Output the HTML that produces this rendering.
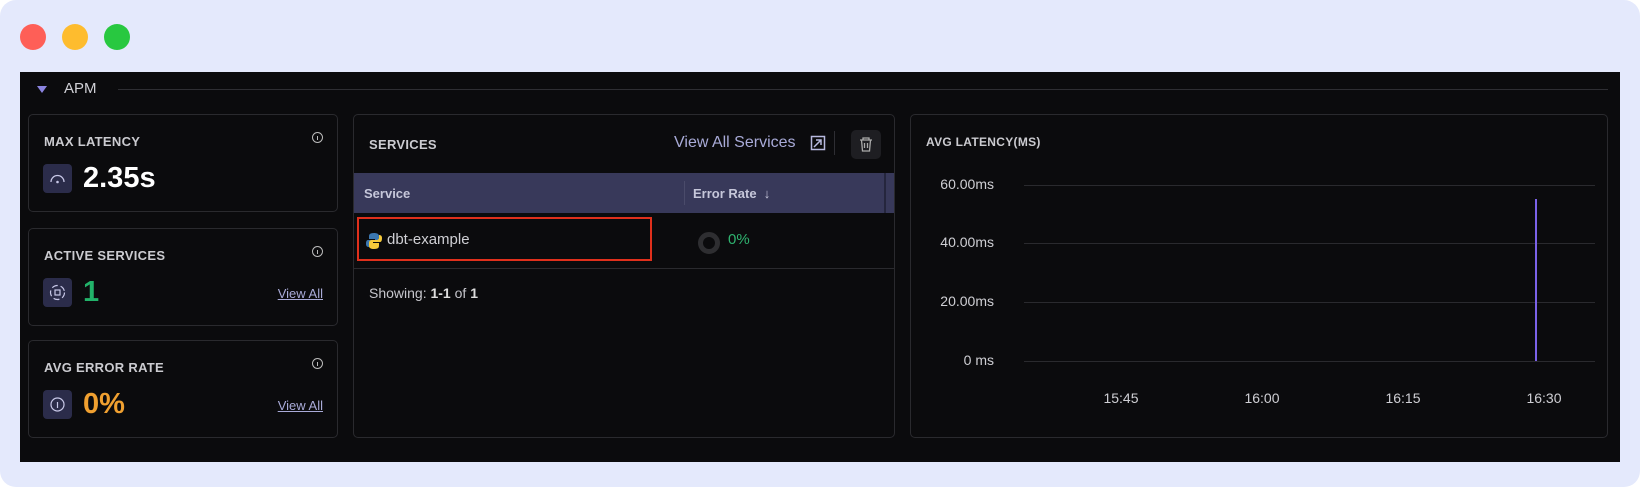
<!DOCTYPE html>
<html><head><style>
*{margin:0;padding:0;box-sizing:border-box}
body{width:1640px;height:487px;background:#fff;font-family:"Liberation Sans",sans-serif;position:relative;overflow:hidden}
.outer{position:absolute;left:0;top:0;width:1640px;height:487px;background:#e4e9fc;border-radius:16px}
.dot{position:absolute;top:24px;width:26px;height:26px;border-radius:50%}
.panel{position:absolute;left:20px;top:72px;width:1600px;height:390px;background:#0b0b0d}
.card{position:absolute;border:1px solid #2a2a2e;border-radius:5px;background:#0b0b0d}
.lbl{position:absolute;color:#cbcbd0;font-weight:bold;font-size:13px;letter-spacing:.3px}
.ibox{position:absolute;left:14px;width:29px;height:29px;background:#2b2c4a;border-radius:4px}
.big{position:absolute;font-weight:bold;font-size:29px}
.va{position:absolute;right:14px;color:#a9abd8;font-size:13px;text-decoration:underline}
.info{position:absolute;right:14px;top:17px;width:11px;height:11px;border:1.3px solid #bbb;border-radius:50%}
.info:after{content:"";position:absolute;left:3.5px;top:3px;width:1.3px;height:4px;background:#bbb}
.t{position:absolute;color:#cfcfd4;font-size:14px}
</style></head><body>
<div class="outer"></div>
<div class="dot" style="left:20px;background:#fe5f57"></div>
<div class="dot" style="left:62px;background:#febc2e"></div>
<div class="dot" style="left:104px;background:#28c840"></div>
<div class="panel">
 <div style="position:absolute;left:17px;top:14px;width:0;height:0;border-left:5px solid transparent;border-right:5px solid transparent;border-top:7px solid #8b84e0"></div>
 <div style="position:absolute;left:44px;top:8px;color:#d0d0d6;font-size:15px">APM</div>
 <div style="position:absolute;left:98px;top:17px;width:1490px;height:1px;background:#2e2e33"></div>

 <div class="card" style="left:8px;top:42px;width:310px;height:98px">
  <div class="lbl" style="left:15px;top:19px">MAX LATENCY</div><div class="info"></div>
  <div class="ibox" style="top:49px"><svg width="29" height="29"><path d="M8 18 A6.5 6.5 0 0 1 21 18" fill="none" stroke="#c8c8e8" stroke-width="1.3"/><circle cx="14.5" cy="18" r="1.3" fill="#c8c8e8"/></svg></div>
  <div class="big" style="left:54px;top:47px;color:#fff">2.35s</div>
 </div>
 <div class="card" style="left:8px;top:156px;width:310px;height:98px">
  <div class="lbl" style="left:15px;top:19px">ACTIVE SERVICES</div><div class="info"></div>
  <div class="ibox" style="top:49px"><svg width="29" height="29"><circle cx="14.5" cy="14.5" r="7" fill="none" stroke="#c8c8e8" stroke-width="1.2" stroke-dasharray="6 3"/><rect x="12" y="12" width="5" height="5" fill="none" stroke="#c8c8e8" stroke-width="1.2"/></svg></div>
  <div class="big" style="left:54px;top:47px;color:#22b36a">1</div>
  <div class="va" style="top:57px">View All</div>
 </div>
 <div class="card" style="left:8px;top:268px;width:310px;height:98px">
  <div class="lbl" style="left:15px;top:19px">AVG ERROR RATE</div><div class="info"></div>
  <div class="ibox" style="top:49px"><svg width="29" height="29"><circle cx="14.5" cy="14.5" r="6.5" fill="none" stroke="#c8c8e8" stroke-width="1.2"/><line x1="14.5" y1="12" x2="14.5" y2="18" stroke="#c8c8e8" stroke-width="1.2"/></svg></div>
  <div class="big" style="left:54px;top:47px;color:#f0a030">0%</div>
  <div class="va" style="top:57px">View All</div>
 </div>

 <div class="card" style="left:333px;top:42px;width:542px;height:324px;overflow:hidden">
  <div class="lbl" style="left:15px;top:22px">SERVICES</div>
  <div style="position:absolute;left:320px;top:19px;color:#a9abd8;font-size:16px">View All Services</div>
  <svg style="position:absolute;left:456px;top:20px" width="16" height="16"><rect x="1.5" y="1.5" width="13" height="13" fill="none" stroke="#b8badf" stroke-width="1.5"/><path d="M4 12 L11 5 M6 5 H11 V10" fill="none" stroke="#b8badf" stroke-width="1.5"/></svg>
  <div style="position:absolute;left:480px;top:16px;width:1px;height:24px;background:#2e2e33"></div>
  <div style="position:absolute;left:497px;top:15px;width:30px;height:29px;background:#1e1e22;border-radius:5px"><svg width="30" height="29"><path d="M9 10 H21 M12 10 V8 H18 V10 M10.5 10 L11.5 21 H18.5 L19.5 10 M13.5 13 V18 M16.5 13 V18" fill="none" stroke="#aaa" stroke-width="1.3"/></svg></div>
  <div style="position:absolute;left:0;top:58px;width:542px;height:40px;background:#38395a"></div>
  <div style="position:absolute;left:530px;top:58px;width:2px;height:40px;background:#25263d"></div>
  <div style="position:absolute;left:330px;top:66px;width:1px;height:24px;background:#4a4b6a"></div>
  <div style="position:absolute;left:10px;top:71px;color:#c6c7da;font-size:13px;font-weight:bold">Service</div>
  <div style="position:absolute;left:339px;top:71px;color:#c6c7da;font-size:13px;font-weight:bold">Error Rate &nbsp;↓</div>
  <div style="position:absolute;left:3px;top:102px;width:295px;height:44px;border:2px solid #e0301c"></div>
  <svg style="position:absolute;left:11px;top:117px" width="18" height="18"><path d="M9 1 C4 1 4 3 4 5 V7 H10 V8 H3 C1 8 1 11 1 12 C1 14 2 15 4 15 V12 C4 11 5 10 7 10 H11 C13 10 14 9 14 7 V4 C14 2 12 1 9 1Z" fill="#3b77b0"/><path d="M9 17 C14 17 14 15 14 13 V11 H8 V10 H15 C17 10 17 7 17 6 C17 4 16 3 14 3 V6 C14 7 13 8 11 8 H7 C5 8 4 9 4 11 V14 C4 16 6 17 9 17Z" fill="#f5c93a"/></svg>
  <div style="position:absolute;left:33px;top:116px;color:#cfcfd4;font-size:15px">dbt-example</div>
  <div style="position:absolute;left:344px;top:117px;width:22px;height:22px;border:5px solid #2e2e31;border-radius:50%"></div>
  <div style="position:absolute;left:374px;top:116px;color:#2fb36f;font-size:15px">0%</div>
  <div style="position:absolute;left:0;top:153px;width:542px;height:1px;background:#2a2a2e"></div>
  <div style="position:absolute;left:15px;top:170px;color:#c6c6cc;font-size:14px">Showing: <b style="color:#ddd">1-1</b> of <b style="color:#ddd">1</b></div>
 </div>

 <div class="card" style="left:890px;top:42px;width:698px;height:324px">
  <div class="lbl" style="left:15px;top:20px;font-size:12px">AVG LATENCY(MS)</div>
 </div>
 <div style="position:absolute;left:1004px;top:113px;width:571px;height:1px;background:#2a2a2e"></div>
 <div style="position:absolute;left:1004px;top:171px;width:571px;height:1px;background:#2a2a2e"></div>
 <div style="position:absolute;left:1004px;top:230px;width:571px;height:1px;background:#2a2a2e"></div>
 <div style="position:absolute;left:1004px;top:289px;width:571px;height:1px;background:#2a2a2e"></div>
 <div style="position:absolute;left:1515px;top:127px;width:2px;height:162px;background:#7b62e8"></div>
 <div class="t" style="left:880px;width:94px;text-align:right;top:104px">60.00ms</div>
 <div class="t" style="left:880px;width:94px;text-align:right;top:162px">40.00ms</div>
 <div class="t" style="left:880px;width:94px;text-align:right;top:221px">20.00ms</div>
 <div class="t" style="left:880px;width:94px;text-align:right;top:280px">0 ms</div>
 <div class="t" style="left:1071px;width:60px;text-align:center;top:318px">15:45</div>
 <div class="t" style="left:1212px;width:60px;text-align:center;top:318px">16:00</div>
 <div class="t" style="left:1353px;width:60px;text-align:center;top:318px">16:15</div>
 <div class="t" style="left:1494px;width:60px;text-align:center;top:318px">16:30</div>
</div>
</body></html>
